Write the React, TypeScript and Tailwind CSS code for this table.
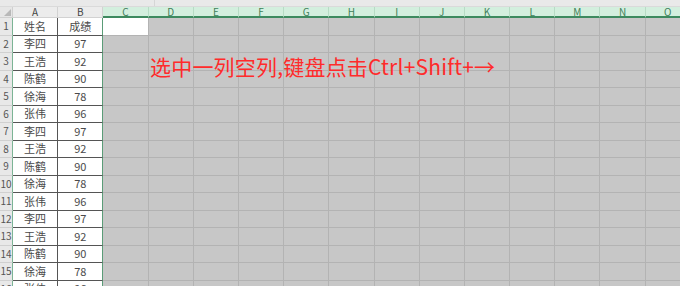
import React from "react";

const cols = ["A","B","C","D","E","F","G","H","I","J","K","L","M","N","O"];
const names = ["李四","王浩","陈鹤","徐海","张伟"];
const scores = ["97","92","90","78","96"];

export default function App() {
  const rows: [string, string][] = [["姓名", "成绩"]];
  for (let i = 0; i < 15; i++) rows.push([names[i % 5], scores[i % 5]]);

  return (
    <div className="relative w-[680px] h-[286px] overflow-hidden bg-[#c7c7c7]" style={{ fontFamily: '"Noto Sans CJK SC", "Liberation Sans", sans-serif' }}>
      <div className="h-[7px] bg-[#e9e9e9] border-b border-[#dadada] flex">
        <div className="w-[155px] border-r border-[#d6d6d6]" />
        <div className="flex-1" />
      </div>
      <div className="grid grid-cols-[13px_repeat(15,45.2px)] auto-rows-[17.5px] grid-rows-[11px]">
        <div className="h-[11px] bg-[#e6e6e6] border-r border-b border-[#d0d0d0] relative overflow-hidden">
          <div className="absolute right-[1px] bottom-[1px] w-0 h-0 border-l-[7px] border-l-transparent border-b-[7px] border-b-[#b8b8b8]" />
        </div>
        {cols.map((c, i) => (
          <div
            key={c}
            className={
              i < 2
                ? "h-[11px] flex items-center justify-center bg-[#ececec] border-r border-b border-[#d2d2d2] text-[#444] text-[10px] leading-none"
                : "h-[11px] flex items-center justify-center bg-[#d3efde] border-r border-[#b7dcc5] border-b-2 border-b-[#3d8a5f] text-[#3f7f5a] text-[10px] leading-none"
            }
          >
            {c}
          </div>
        ))}
        {Array.from({ length: 16 }).map((_, r) => (
          <React.Fragment key={r}>
            <div className="bg-[#e8e8e8] border-r border-r-[#7cb495] border-b border-b-[#d0d0d0] text-[10px] text-[#555] flex items-center justify-center leading-none">
              {r + 1}
            </div>
            {cols.map((c, i) => {
              if (i < 2) {
                return (
                  <div
                    key={c}
                    className={
                      "bg-white border-b border-[#555] text-[11px] text-[#4a4a4a] flex items-center justify-center leading-none " +
                      (i === 0 ? "border-r border-r-[#555]" : "border-r border-r-[#5a9c77]")
                    }
                  >
                    {rows[r] ? (i === 0 ? rows[r][0] : rows[r][1]) : ""}
                  </div>
                );
              }
              if (i === 2 && r === 0) {
                return <div key={c} className="bg-white border-r border-b border-[#b3b3b3]" />;
              }
              return <div key={c} className="border-r border-b border-[#b3b3b3]" />;
            })}
          </React.Fragment>
        ))}
      </div>
      <div className="absolute left-[150px] top-[53px] text-[21px] leading-[27px] tracking-[0.2px] text-[#ff2b2b] whitespace-nowrap">
        选中一列空列,键盘点击Ctrl+Shift+→
      </div>
    </div>
  );
}
